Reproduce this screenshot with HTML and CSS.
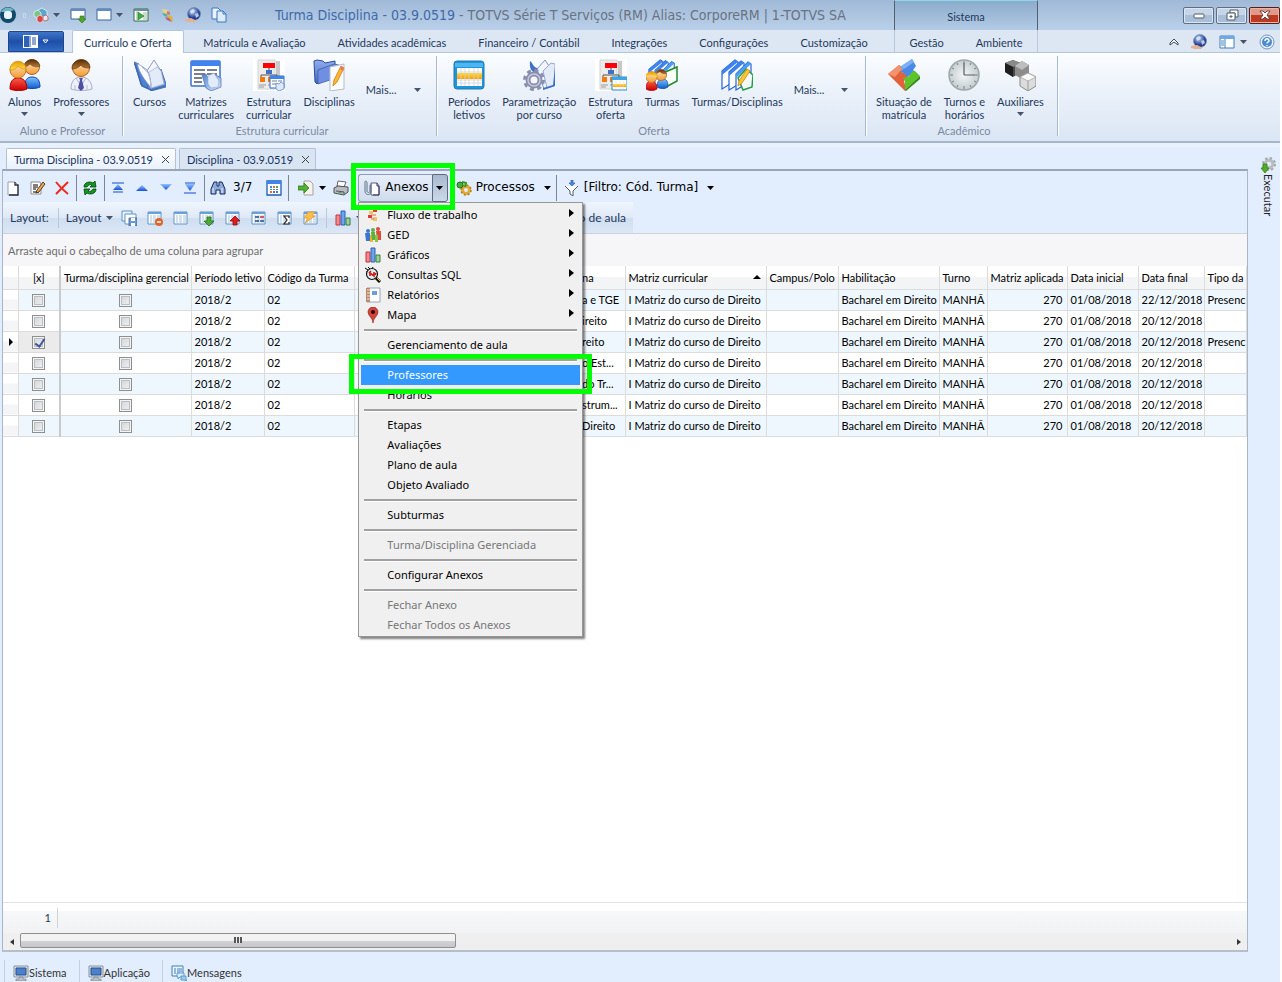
FILE: index.html
```html
<!DOCTYPE html>
<html lang="pt-BR">
<head>
    <meta charset="UTF-8">
    <meta name="viewport" content="width=device-width, initial-scale=1.0">
    <title>Turma Disciplina - 03.9.0519</title>
    <link rel="stylesheet" href="styles.css">
</head>
<body>
    <!-- Ícones -->
    <svg class="sprite" aria-hidden="true">
        <defs>
            <linearGradient id="gHair" x1="0" y1="0" x2="0" y2="1"><stop offset="0" stop-color="#5a2f08"/><stop offset="1" stop-color="#b57a3c"/></linearGradient>
            <linearGradient id="gSkin" x1="0" y1="0" x2="0" y2="1"><stop offset="0" stop-color="#ffe9bd"/><stop offset="1" stop-color="#f39a35"/></linearGradient>
            <linearGradient id="gBlond" x1="0" y1="0" x2="0" y2="1"><stop offset="0" stop-color="#e69a00"/><stop offset="1" stop-color="#ffe04a"/></linearGradient>
            <linearGradient id="gRed" x1="0" y1="0" x2="0" y2="1"><stop offset="0" stop-color="#ff5a4a"/><stop offset="1" stop-color="#c80000"/></linearGradient>
            <linearGradient id="gBlue" x1="0" y1="0" x2="0" y2="1"><stop offset="0" stop-color="#7fc0ff"/><stop offset="1" stop-color="#0a5fd0"/></linearGradient>
            <linearGradient id="gBook" x1="0" y1="0" x2="1" y2="1"><stop offset="0" stop-color="#4d82d0"/><stop offset="1" stop-color="#dcebff"/></linearGradient>
            <linearGradient id="gFolder" x1="0" y1="0" x2="0" y2="1"><stop offset="0" stop-color="#8fb1ec"/><stop offset="1" stop-color="#4566c4"/></linearGradient>
            <linearGradient id="gOrange" x1="0" y1="0" x2="0" y2="1"><stop offset="0" stop-color="#ffd93a"/><stop offset="1" stop-color="#ff9d0a"/></linearGradient>
            <linearGradient id="gArrow" x1="0" y1="0" x2="0" y2="1"><stop offset="0" stop-color="#8fc4ff"/><stop offset="1" stop-color="#1a50d8"/></linearGradient>
            <radialGradient id="gClock"><stop offset="0" stop-color="#f4f6f7"/><stop offset="1" stop-color="#c5cdd0"/></radialGradient>
            <radialGradient id="gGlobe" cx=".4" cy=".3"><stop offset="0" stop-color="#c7d8f5"/><stop offset="1" stop-color="#1d3f94"/></radialGradient>
        </defs>

        <symbol id="caret" viewBox="0 0 7 4"><path d="M0 0h7L3.5 4z" fill="currentColor"/></symbol>

        <!-- ícones grandes -->
        <symbol id="alunos" viewBox="0 0 32 32">
            <path d="M15 28c1-7 3-10 8-10 6 0 8 4 8 10-4 2-12 2-16 0z" fill="url(#gBlue)" stroke="#1546a8"/>
            <circle cx="23" cy="8" r="7.500" fill="url(#gSkin)" stroke="#a8671f"/>
            <path d="M15 7c1-8 14-9 16 0-4 2-8 0-10-2-2 2-4 3-6 2z" fill="url(#gHair)" stroke="#5a2f08" stroke-width=".5"/>
            <path d="M1 30c0-8 3-11 8-11s9 3 9 11c-4 2-13 2-17 0z" fill="url(#gRed)" stroke="#b00000"/>
            <circle cx="9" cy="11" r="8" fill="url(#gSkin)" stroke="#c07a1c"/>
            <path d="M1 11c0-11 15-12 16-1-4 0-6-1-8-3-2 3-4 4-8 4z" fill="url(#gBlond)" stroke="#d08600" stroke-width=".6"/>
        </symbol>
        <symbol id="professor" viewBox="0 0 32 32">
            <path d="M6 30c0-7 3-12 10-12s11 5 11 12c-5 2-16 2-21 0z" fill="#eef0fa" stroke="#a7abc9"/>
            <path d="M11 19l5 8 5-8M10 26v5M22 26v5" fill="none" stroke="#b6bad6"/>
            <path d="M14 19h4l-1 2 2 8-3 3-3-3 2-8z" fill="#4f4fa8"/>
            <circle cx="16" cy="9" r="8.500" fill="url(#gSkin)" stroke="#a8671f"/>
            <path d="M7 10C6-1 25-3 25 9c-5 0-8-1-9-3-2 2-5 4-9 4z" fill="url(#gHair)" stroke="#4d2806" stroke-width=".6"/>
        </symbol>
        <symbol id="livro" viewBox="0 0 32 32">
            <path d="M0 3l5 2 7 17 4 8L7 26z" fill="#4d82d0" stroke="#3a62ad" stroke-width=".8"/>
            <path d="M27 10l5 15v3l-15 4-4-4z" fill="#5b8bd2" stroke="#3a62ad" stroke-width=".8"/>
            <path d="M13 12l7-11 7 11 3 13-13 4z" fill="#f3f6fd" stroke="#8e9cc4"/>
            <path d="M14 14l9-6 4 4 3 13-13 4z" fill="#e3eaf8" stroke="#a3b0d2" stroke-width=".7"/>
            <path d="M3 4l10 7c3 5 4 11 4 18C12 22 5 15 3 4z" fill="#fbfcff" stroke="#7f93c6"/>
            <path d="M5 5l9 9c2 5 3 9 3 15" fill="none" stroke="#b6c3e2"/>
            <path d="M1 5l7 22 9 4 14-4" fill="none" stroke="#3d68b8" stroke-width="1.300"/>
        </symbol>
        <symbol id="matrizes" viewBox="0 0 32 32">
            <rect x="1" y="2" width="29" height="25" rx="1" fill="#fff" stroke="#3c6fd0" stroke-width="1.500"/>
            <path d="M1 2h29v5H1z" fill="#3f83ee"/>
            <path d="M4 11h11M17 11h10M4 15h11M17 15h10M4 19h8M4 23h8" stroke="#4d5666" stroke-width="1.300"/>
            <path d="M12 16l4-1 4 8 6-7 5 3v9l-10 4-5-3z" fill="url(#gBook)" stroke="#5b78b4" stroke-width=".8"/>
            <path d="M18 17l6-3 5 8-1 6-7 1-3-4z" fill="#e3ecfb" stroke="#92a7d4" stroke-width=".6"/>
        </symbol>
        <symbol id="estrutura" viewBox="0 0 32 32">
            <path d="M0 0h32v32H0z" fill="#fff"/>
            <path d="M5 1h17v29H5z" fill="#ececec" stroke="#d2d2d2"/><path d="M23 2h4v26h-4z" fill="#c8c8c8"/>
            <path d="M10 4h12v5H10z" fill="#fb0007"/>
            <path d="M16 9v4M8 19v-3h16v3" stroke="#555" fill="none"/>
            <path d="M13 11h6v4h-6z" fill="#4470c4"/>
            <path d="M7 18h5v5H7z" fill="#f5780a"/><path d="M15 18h4v5h-4z" fill="#f5780a"/>
            <path d="M6 26h7M15 26h3M6 28h5" stroke="#9a9a9a"/>
        </symbol>
        <symbol id="estrutura-curr" viewBox="0 0 32 32">
            <use href="#estrutura" width="32" height="32"/>
            <path d="M17 17h14v12H17z" fill="#fff" stroke="#2e6bd0"/><path d="M17 17h14v3H17z" fill="#3f83ee"/>
            <path d="M19 22h5M19 25h4M25 22h4" stroke="#6d7c94"/>
            <path d="M23 24l3 1 2-2 3 2v5l-5 2-3-2z" fill="#dbe9fd" stroke="#5b78b4" stroke-width=".7"/>
        </symbol>
        <symbol id="estrutura-oferta" viewBox="0 0 32 32">
            <use href="#estrutura" width="32" height="32"/>
            <path d="M17 18h15v13H17z" fill="#fff" stroke="#2387c8"/><path d="M17 18h15v3H17z" fill="#3ca5e8"/>
            <path d="M18 25h13v3H18z" fill="url(#gOrange)"/><path d="M21 22v8M25 22v8M28 22v8" stroke="#e6dcc8" stroke-width=".7"/>
        </symbol>
        <symbol id="disciplinas" viewBox="0 0 32 32">
            <path d="M1 2l3-1 6 1 2 2 10-2v4L4 25l-2-2z" fill="url(#gFolder)" stroke="#2f4b9c"/>
            <path d="M5 11l16-6 5 1-3 13-18 6z" fill="#6f90e2" stroke="#38559f" stroke-width=".7"/>
            <path d="M17 8l14-3v25l-14 2z" fill="#fbfcfe" stroke="#b6bccb"/>
            <path d="M28 7l3 2-7 14-4 4 1-6z" fill="#ffb62e" stroke="#c97c12" stroke-width=".8"/><path d="M28 7l3 2-1 3-3-2z" fill="#e87a6a"/>
        </symbol>
        <symbol id="calendario" viewBox="0 0 32 32">
            <rect x="1" y="2" width="30" height="28" rx="3" fill="#1f95dc" stroke="#2277b4"/>
            <path d="M2 4h28v4H2z" fill="#4db5f1"/>
            <path d="M4 9h25v18H4z" fill="#fff"/>
            <path d="M4 14h25v6H4z" fill="url(#gOrange)"/>
            <path d="M8 9v18M12 9v18M16 9v18M21 9v18M25 9v18M4 13h25M4 21h25M4 24h25" stroke="#c9d3dc" stroke-width=".8"/>
        </symbol>
        <symbol id="param" viewBox="0 0 32 32">
            <path d="M14 10l8-9 8 12 1 14-10 3z" fill="#f3f6fd" stroke="#7f93c6"/>
            <path d="M20 12l8-8 4 1v21l-8 3z" fill="#e3eaf8" stroke="#9aa6cf"/>
            <path d="M7 2c-1 8 2 11 6 12l3 4-2-9c-4-1-4-5-7-7zM32 8v19l-12 4v-2l10-3z" fill="#3f72c6"/>
            <circle cx="11" cy="21" r="6" fill="none" stroke="#8a8fae" stroke-width="5"/>
            <circle cx="11" cy="21" r="9.500" fill="none" stroke="#8a8fae" stroke-width="3" stroke-dasharray="4 3.460"/>
            <circle cx="11" cy="21" r="6" fill="none" stroke="#c4c8de" stroke-width="1.500"/>
            <circle cx="11" cy="21" r="3" fill="#f4f6fc"/>
        </symbol>
        <symbol id="pastas" viewBox="0 0 32 32">
            <path d="M1 12L14 1l3 2v17L1 30z" fill="#fff" stroke="#2465d6" stroke-width="1.200"/>
            <path d="M1 12L14 1l3 2L1 16z" fill="#3f83ee"/>
            <path d="M8 13L20 2l3 2v18L8 31z" fill="#fff" stroke="#2465d6" stroke-width="1.200"/>
            <path d="M8 13L20 2l3 2L8 17z" fill="#3f83ee"/>
            <path d="M15 15L27 3l3 2v17L15 31z" fill="#f4faff" stroke="#2465d6" stroke-width="1.200"/>
            <path d="M15 15L27 3l3 2-15 14z" fill="#4c9cf4"/>
        </symbol>
        <symbol id="turmas" viewBox="0 0 32 32">
            <use href="#pastas" width="32" height="28"/>
            <path d="M17 14l14-6v14l-13 7z" fill="#f8fff8" stroke="#1f8a2a" stroke-width="1.500"/>
            <path d="M11 28c0-6 2-8 6-8s5 3 5 8c-3 2-8 2-11 0z" fill="url(#gBlue)" stroke="#1546a8" stroke-width=".7"/>
            <circle cx="15" cy="16" r="5.500" fill="url(#gSkin)" stroke="#a8671f" stroke-width=".8"/><path d="M10 15c0-6 10-6 11 0-4 1-6-1-7-2z" fill="url(#gHair)"/>
            <path d="M0 30c0-6 2-8 5-8s6 2 6 8c-3 2-8 2-11 0z" fill="url(#gRed)" stroke="#b00000" stroke-width=".7"/>
            <circle cx="5.500" cy="18" r="5.500" fill="url(#gSkin)" stroke="#c07a1c" stroke-width=".8"/><path d="M0 18c0-7 11-7 11 0-4 0-5-1-6-2z" fill="url(#gBlond)"/>
        </symbol>
        <symbol id="turmas-disc" viewBox="0 0 32 32">
            <use href="#pastas" width="32" height="32"/>
            <path d="M17 19l8-9 7 6-1 12-9 3z" fill="#f3fbf6" stroke="#2a9a4a" stroke-width="1.500"/>
            <path d="M26 10l3 2-8 12-4 3 1-5z" fill="#ffc52e" stroke="#c98312" stroke-width=".8"/>
        </symbol>
        <symbol id="situacao" viewBox="0 0 32 32">
            <path d="M0 15L11 6l4 3-2 4 4 1 3 4-4 4 2 8-1 2z" fill="#e2603a"/><path d="M0 15L11 6l4 3-8 9z" fill="#f2936c"/>
            <path d="M12 8l12-8 4 7-3 4 3 2-9 5-3-4-4-1 3-3z" fill="#4a8ae6"/><path d="M12 8l12-8 2 3-10 7z" fill="#7fb0f4"/>
            <path d="M17 22l-2-3 5-1 5-6 3 1 4 4-15 14z" fill="#5ec42a"/><path d="M17 31l15-14v3L18 32z" fill="#2f8a14"/>
        </symbol>
        <symbol id="relogio" viewBox="0 0 32 32">
            <circle cx="16" cy="16" r="15" fill="url(#gClock)" stroke="#9fa7aa" stroke-width="1.500"/>
            <path d="M16 16V4M16 16h11" stroke="#555c60" stroke-width="1.200"/>
            <path d="M16 2v3M16 27v3M2 16h3M27 16h3M9 4l1 2M22 26l1 2M4 9l2 1M26 22l2 1M4 23l2-1M26 10l2-1M9 28l1-2M22 6l1-2" stroke="#777f83"/>
        </symbol>
        <symbol id="cubos" viewBox="0 0 32 32">
            <path d="M1 4l8-3 8 3v9l-8 5-8-5z" fill="#4a4a4a"/><path d="M1 4l8-3 8 3-8 4z" fill="#8a8a8a"/><path d="M1 4l8 4v10l-8-5z" fill="#1f1f1f"/>
            <path d="M11 7l7-5 7 4v9l-7 5-7-4z" fill="#8c8c8c"/><path d="M11 7l7-5 7 4-7 5z" fill="#bdbdbd"/>
            <path d="M16 18l8-4 8 4v9l-8 5-8-5z" fill="#dcdcdc" stroke="#8b8b8b"/><path d="M16 18l8 4 8-4-8-4z" fill="#fafafa" stroke="#9b9b9b" stroke-width=".7"/><path d="M24 22v10" stroke="#9b9b9b"/>
        </symbol>

        <!-- ícones pequenos -->
        <symbol id="totvs" viewBox="0 0 16 16"><circle cx="8" cy="8" r="8" fill="#12496b"/><path d="M1 5a8 8 0 0 1 13-2L8 5z" fill="#6db6c6"/><rect x="4" y="4" width="8" height="8" rx="3" fill="#e9f3fb"/></symbol>
        <symbol id="cubinhos" viewBox="0 0 16 16"><path d="M5 3l4-2 5 3v6l-5 3-4-4z" fill="#5aa8cf" stroke="#e8f6fb" stroke-width=".8"/><path d="M1 5l4-2 3 3v4l-4 1-3-2z" fill="#7cc48a" stroke="#f1fbf1" stroke-width=".7"/><path d="M4 10l3-2 3 2v4l-3 2-3-2z" fill="#d8474a" stroke="#fbecec" stroke-width=".7"/><path d="M10 9l3-1 2 2v3l-3 1-2-1z" fill="#e7e9ee" stroke="#b3474a" stroke-width=".7"/></symbol>
        <symbol id="janela-baixo" viewBox="0 0 16 16"><path d="M1 2h14v10H1z" fill="#fff" stroke="#3c659c"/><path d="M1 2h14v2H1z" fill="#5f8cc6"/><path d="M10 9h4v3h2l-4 4-4-4h2z" fill="#4fa52c" stroke="#2e7815" stroke-width=".6"/></symbol>
        <symbol id="janela" viewBox="0 0 16 16"><path d="M1 2h14v11H1z" fill="#fff" stroke="#3c659c"/><path d="M1 2h14v2H1z" fill="#5f8cc6"/></symbol>
        <symbol id="porta" viewBox="0 0 16 16"><path d="M1 2h14v12H1z" fill="#fff" stroke="#2f7040"/><path d="M1 2h14v2H1z" fill="#6a8a9c"/><path d="M4 3v11M11 5v8M13 5v8" stroke="#9ab5a4"/><path d="M5 5l6 4-6 4z" fill="#3fae3c" stroke="#1d7a26" stroke-width=".6"/></symbol>
        <symbol id="cores" viewBox="0 0 16 16"><path d="M3 2l6 1 1 4-5-1z" fill="#e9d872"/><path d="M8 4l3 1v3l-3-1z" fill="#d0748e"/><path d="M3 6l5 1 1 3-4-1z" fill="#5ab0a0"/><path d="M8 8l5 1 1 6-4-3z" fill="#d8b63a"/><path d="M6 10l4 1 3 4-5-2z" fill="#c2587e"/></symbol>
        <symbol id="globo" viewBox="0 0 16 16"><circle cx="9" cy="7" r="6.500" fill="url(#gGlobe)" stroke="#7086b0" stroke-width=".6"/><path d="M5 4l3-2 2 2-2 2-2 1zM10 7l3-1 1 3-3 2z" fill="#dfe7f5" opacity=".8"/><path d="M0 12l6-1 4 2 3-1-3 3H4l-4-1z" fill="#e6b193"/></symbol>
        <symbol id="copiar" viewBox="0 0 16 16"><path d="M1 1h6l3 3v8H1z" fill="#eaf3fd" stroke="#3b77c2"/><path d="M6 4h6l3 3v8H6z" fill="#dcecfd" stroke="#3b77c2"/><path d="M12 4v3h3" fill="none" stroke="#3b77c2"/></symbol>
        <symbol id="app" viewBox="0 0 15 13"><path d="M0 0h15v13H0z" fill="#fff"/><path d="M1 1h5v11H1z" fill="#2d62b4"/><path d="M9 3h4M9 5h4M9 7h4M9 9h4" stroke="#24519f"/><path d="M7 1v11" stroke="#24519f"/></symbol>
        <symbol id="caret-app" viewBox="0 0 7 5"><path d="M1 1h5L3.500 4z" fill="none" stroke="#fff"/></symbol>
        <symbol id="painel" viewBox="0 0 16 16"><path d="M1 2h14v12H1z" fill="#fff" stroke="#3c7fc0"/><path d="M1 2h14v3H1z" fill="#6fa9e2"/><path d="M6 5v9" stroke="#3c7fc0"/><path d="M2 7h3M2 9h3M2 11h3" stroke="#5584b5"/></symbol>
        <symbol id="ajuda" viewBox="0 0 16 16"><circle cx="8" cy="8" r="7" fill="#e7f0fa" stroke="#7b96b8"/><circle cx="8" cy="8" r="5" fill="#4a8ad0"/><path d="M6 7c0-3 4-3 4 0 0 1-2 1-2 2.500M8 11v1" stroke="#fff" stroke-width="1.400" fill="none"/></symbol>
        <symbol id="recolher" viewBox="0 0 10 8"><path d="M1 5l4-4 4 4v2L5 4 1 7z" fill="#fff" stroke="#3b4960"/></symbol>
        <symbol id="minimizar" viewBox="0 0 14 14"><rect x="2" y="6" width="10" height="4" rx="1" fill="#fff" stroke="#4f5a6b"/></symbol>
        <symbol id="restaurar" viewBox="0 0 14 14"><path d="M5 2h8v7h-3V5H5z" fill="#fff" stroke="#4f5a6b"/><path d="M2 5h8v7H2z" fill="#fff" stroke="#4f5a6b"/><path d="M5 8h2v1H5z" fill="#a9bdd6" stroke="#4f5a6b"/></symbol>
        <symbol id="fechar-jan" viewBox="0 0 14 14"><path d="M2 3h3l2 2 2-2h3L9 7l3 4H9L7 9l-2 2H2l3-4z" fill="#fff" stroke="#5d3836" stroke-width=".9"/></symbol>
        <symbol id="fechar-aba" viewBox="0 0 9 9"><path d="M1 1l7 7M8 1L1 8" stroke="#3f444b"/></symbol>

        <symbol id="novo" viewBox="0 0 16 16"><path d="M2 2h7l3 3v10H2z" fill="#fff" stroke="#9b9fa8"/><path d="M9 2v3h3v10H3" fill="none" stroke="#2c2f36" stroke-width="1.300"/></symbol>
        <symbol id="editar" viewBox="0 0 16 16"><path d="M1 2h9l1 2v10H1z" fill="#fff" stroke="#8d8d8d"/><path d="M3 5h5M3 7h5M3 9h3M3 12h6" stroke="#000"/><path d="M13 2l2 2-6 8-3 1 1-3z" fill="#e7a45c" stroke="#4d2e15" stroke-width=".9"/></symbol>
        <symbol id="excluir" viewBox="0 0 16 16"><path d="M2 2c3 4 7 8 12 12M14 2C10 6 6 10 2 14" stroke="#ee2a1b" stroke-width="2" fill="none"/></symbol>
        <symbol id="atualizar" viewBox="0 0 16 16"><path d="M2 7c0-5 6-6 9-4l2-2 1 6H8l2-2c-2-1-4 0-5 2z" fill="#0d9a1d" stroke="#033f08" stroke-width=".8"/><path d="M14 9c0 5-6 6-9 4l-2 2-1-6h6l-2 2c2 1 4 0 5-2z" fill="#0d9a1d" stroke="#033f08" stroke-width=".8"/></symbol>
        <symbol id="primeiro" viewBox="0 0 16 16"><path d="M2 3h12M3 12h10" stroke="#1648d8" stroke-width="1.200"/><path d="M8 4l5 6H3z" fill="url(#gArrow)"/></symbol>
        <symbol id="acima" viewBox="0 0 16 16"><path d="M8 5l6 6H2z" fill="url(#gArrow)"/></symbol>
        <symbol id="abaixo" viewBox="0 0 16 16"><path d="M8 10L2 4h12z" fill="url(#gArrow)"/></symbol>
        <symbol id="ultimo" viewBox="0 0 16 16"><path d="M3 3h10M2 13h12" stroke="#1648d8" stroke-width="1.200"/><path d="M8 11L3 4h10z" fill="url(#gArrow)"/></symbol>
        <symbol id="binoculo" viewBox="0 0 16 16"><path d="M4 2h3v4h2V2h3l3 7v5h-5v-4H6v4H1V9z" fill="#8eaad8" stroke="#17295c"/><path d="M3 8v5M12 8v5" stroke="#e9f1ff"/></symbol>
        <symbol id="grade" viewBox="0 0 16 16"><path d="M1 1h14v14H1z" fill="#fff" stroke="#1f5bb5" stroke-width="1.300"/><path d="M1 1h14v3H1z" fill="#3f83ee"/><path d="M4 6h2v2H4zM4 9h2v1H4z" fill="#3b8ad8"/><path d="M7 6h2v2H7zM4 11h2v2H4z" fill="#e26a3a"/><path d="M10 6h2v2h-2zM7 9h2v1H7z" fill="#4ca350"/><path d="M7 11h2v2H7zM10 9h2v1h-2zM10 11h2v2h-2z" fill="#5a6dc4"/></symbol>
        <symbol id="exportar" viewBox="0 0 16 16"><path d="M6 1h6l3 3v11H6z" fill="#f6f3ee" stroke="#a9a39a"/><path d="M0 6h6V3l5 5-5 5v-3H0z" fill="#52b131" stroke="#2c7d17" stroke-width=".8"/></symbol>
        <symbol id="imprimir" viewBox="0 0 16 16"><path d="M5 1l8 1-2 5-7-1z" fill="#fff" stroke="#666"/><path d="M1 8l4-2 10 1v5l-4 3-10-2z" fill="#b9bcc0" stroke="#4d5157"/><path d="M3 11l8 1v2" fill="none" stroke="#4d5157"/><path d="M5 12l4 1" stroke="#4caf50"/></symbol>
        <symbol id="anexo" viewBox="0 0 16 16"><path d="M7 3h6l2 3v9H7z" fill="#fff" stroke="#5a5b90"/><path d="M13 3v3h2v9H9" fill="none" stroke="#36366a"/><path d="M6 5v6c0 2-3 2-3 0V3c0-3-3-2-2 0v8c0 4 5 5 6 1V4" fill="none" stroke="#5b7387"/></symbol>
        <symbol id="processos" viewBox="0 0 16 16"><circle cx="10" cy="10" r="3.500" fill="none" stroke="#e2ab32" stroke-width="3"/><circle cx="10" cy="10" r="5" fill="none" stroke="#b57d18" stroke-width="1.500" stroke-dasharray="2 1.900"/><circle cx="4" cy="5" r="3" fill="#4aae3a" stroke="#1f7317"/><path d="M6 2l4 1-1 4" fill="none" stroke="#2f9a24" stroke-width="2"/></symbol>
        <symbol id="filtro" viewBox="0 0 16 16"><path d="M7 0h2v3h2L8 6 5 3h2z" fill="#4f86dc" stroke="#2f63b8" stroke-width=".7"/><path d="M1 6l5 5v3l3 2v-5l5-5" fill="#fff" stroke="#4f5864"/></symbol>

        <symbol id="tabela" viewBox="0 0 16 16"><path d="M1 2h13v12H1z" fill="#fff" stroke="#5f93c8"/><path d="M1 2h13v2H1z" fill="#6aa0d8"/><path d="M3 6h2M6 6h3M10 6h3M3 8h2M6 8h3M10 8h3M3 10h2M6 10h3M10 10h3M3 12h2M6 12h3M10 12h3" stroke="#a7c3dd"/></symbol>
        <symbol id="tabela-salvar" viewBox="0 0 16 16"><path d="M1 1h10v10H1z" fill="#e8f2fb" stroke="#5f93c8"/><path d="M4 4h11v10H4z" fill="#fff" stroke="#5f93c8"/><path d="M8 8h8v8H8z" fill="#6f9bd4" stroke="#345f9c" stroke-width=".8"/><path d="M10 8h4v3h-4zM10 13h4v3h-4z" fill="#fff"/></symbol>
        <symbol id="tabela-menos" viewBox="0 0 16 16"><use href="#tabela" width="16" height="16"/><circle cx="12" cy="12" r="4" fill="#e0642c"/><path d="M10 12h4" stroke="#fff" stroke-width="1.500"/></symbol>
        <symbol id="tabela-desce" viewBox="0 0 16 16"><use href="#tabela" width="16" height="16"/><path d="M8 7h4v4h3l-5 5-5-5h3z" fill="#4fa83a" stroke="#276b18" stroke-width=".8"/></symbol>
        <symbol id="tabela-sobe" viewBox="0 0 16 16"><use href="#tabela" width="16" height="16"/><path d="M8 15h4v-4h3l-5-5-5 5h3z" fill="#e01c1c" stroke="#8d0b0b" stroke-width=".8"/></symbol>
        <symbol id="tabela-linhas" viewBox="0 0 16 16"><use href="#tabela" width="16" height="16"/><path d="M4 7h4M4 11h4" stroke="#234c80" stroke-width="1.500"/><path d="M9 7h4" stroke="#d02a2a" stroke-width="1.500"/><path d="M9 11h4" stroke="#234c80" stroke-width="1.500"/></symbol>
        <symbol id="tabela-soma" viewBox="0 0 16 16"><use href="#tabela" width="16" height="16"/><path d="M12 8V6H7l3 4-3 4h5v-2" fill="#fff" stroke="#222" stroke-width="1.200"/></symbol>
        <symbol id="tabela-raio" viewBox="0 0 16 16"><use href="#tabela" width="16" height="16"/><path d="M5 2h7L9 6h3L2 13l3-5H1z" fill="#fbc04a" stroke="#dd9320" stroke-width=".7"/></symbol>
        <symbol id="grafico" viewBox="0 0 16 16"><path d="M1 5h4v10H1z" fill="#f08a90" stroke="#c8323c"/><path d="M6 1h4v14H6z" fill="#6fa4e8" stroke="#2a62b8"/><path d="M11 8h4v7h-4z" fill="#a2cf9a" stroke="#35803a"/></symbol>

        <symbol id="fluxo" viewBox="0 0 16 16"><path d="M3 0h10v16H3z" fill="#f8efe4"/><path d="M8 1h4v4H8zM3 8h4v3H3z" fill="#e03a34"/><path d="M4 4h4v3H4zM8 10h4v4H8z" fill="#eac46f"/><path d="M6 8h5M6 12h3" stroke="#cf6f5f"/></symbol>
        <symbol id="ged" viewBox="0 0 16 16"><circle cx="3" cy="4" r="2" fill="#3d76d0"/><path d="M0 6h5v8H1z" fill="#3d76d0"/><circle cx="8" cy="3" r="2" fill="#59b33e"/><path d="M5 8h3v7H5z" fill="#f0b52c"/><path d="M6 5h4v8H7z" fill="#59b33e"/><circle cx="13" cy="2" r="2" fill="#e04a3a"/><path d="M11 4h5v9h-4z" fill="#e04a3a"/><path d="M10 8h3v7h-3z" fill="#8cc152"/></symbol>
        <symbol id="sql" viewBox="0 0 16 16"><path d="M0 1l3 2M3 0l2 2M1 5h3M8 0L7 2" stroke="#000"/><circle cx="7" cy="7" r="5.500" fill="#d5f3f3" stroke="#111" stroke-width="1.200"/><path d="M4 6l2-2M5 9V6l4 3V5M10 8l1-2" stroke="#e01010" stroke-width="1.600" fill="none"/><path d="M11 11l4 4" stroke="#111" stroke-width="3"/><path d="M12 11l3 3" stroke="#e8c51c"/></symbol>
        <symbol id="relatorio" viewBox="0 0 16 16"><path d="M2 1h13v14H2z" fill="#fff" stroke="#9aa5b4"/><path d="M1 1h4v14H1z" fill="#b98a70"/><path d="M2 3h3M2 6h3M2 9h3M2 12h3" stroke="#f4e3d7"/><path d="M7 5h5M7 7h5" stroke="#3f7ccf" stroke-width="1.300"/></symbol>
        <symbol id="pino" viewBox="0 0 16 16"><path d="M8 16C8 11 3 9 3 5a5 5 0 0 1 10 0c0 4-5 6-5 11z" fill="#d0453c" stroke="#9c2a22" stroke-width=".7"/><circle cx="8" cy="5" r="2" fill="#30090a"/></symbol>

        <symbol id="monitor" viewBox="0 0 16 16"><path d="M1 1h14v11H1z" fill="#dfe3e8" stroke="#8a929c"/><path d="M3 3h10v7H3z" fill="#4a80cc" stroke="#2b4f88"/><path d="M6 12h4v2h3v2H3v-2h3z" fill="#bcc2c9" stroke="#7b838d" stroke-width=".7"/></symbol>
        <symbol id="mensagens" viewBox="0 0 16 16"><path d="M1 1h11v10H1z" fill="#eaf4fd" stroke="#3e7fb8"/><path d="M3 4h2M6 4h5M3 6h2M6 6h5M3 8h2M6 8h3" stroke="#3e7fb8"/><path d="M6 8h7v4H9l-2 2v-2H6z" fill="#d8ecfb" stroke="#4a8ec6" stroke-width=".8"/><path d="M10 11h5v3l1 2-3-1h-3z" fill="#9fccee" stroke="#4a8ec6" stroke-width=".8"/></symbol>
        <symbol id="executar" viewBox="0 0 16 16"><circle cx="9" cy="7" r="3.800" fill="none" stroke="#b9bdbd" stroke-width="3"/><circle cx="9" cy="7" r="6" fill="none" stroke="#a5a9a9" stroke-width="2" stroke-dasharray="2.500 2.200"/><path d="M3 7h4v4h2l-4 5-4-5h2z" fill="#55ac2a" stroke="#2f7d12" stroke-width=".8"/></symbol>
    </svg>

    <header class="titlebar">
        <div class="quick">
            <svg class="ic"><use href="#totvs"/></svg>
            <span class="grip"></span>
            <button aria-label="Módulos"><svg class="ic"><use href="#cubinhos"/></svg><svg class="caret"><use href="#caret"/></svg></button>
            <button aria-label="Abrir"><svg class="ic"><use href="#janela-baixo"/></svg></button>
            <button aria-label="Janelas"><svg class="ic"><use href="#janela"/></svg><svg class="caret"><use href="#caret"/></svg></button>
            <button aria-label="Sair"><svg class="ic"><use href="#porta"/></svg></button>
            <button aria-label="Cores"><svg class="ic"><use href="#cores"/></svg></button>
            <button aria-label="Web"><svg class="ic"><use href="#globo"/></svg></button>
            <button aria-label="Copiar"><svg class="ic"><use href="#copiar"/></svg></button>
        </div>
        <h1 class="titulo"><b>Turma Disciplina - 03.9.0519</b> - TOTVS Série T Serviços (RM) Alias: CorporeRM | 1-TOTVS SA</h1>
        <div class="contexto">Sistema</div>
        <div class="janela-botoes">
            <button class="jb" aria-label="Minimizar"><svg class="ic14"><use href="#minimizar"/></svg></button>
            <button class="jb" aria-label="Restaurar"><svg class="ic14"><use href="#restaurar"/></svg></button>
            <button class="jb fechar" aria-label="Fechar"><svg class="ic14"><use href="#fechar-jan"/></svg></button>
        </div>
    </header>

    <nav class="abas">
        <div class="abas-principais">
            <button class="app-btn" aria-label="Menu"><svg class="ic-app"><use href="#app"/></svg><svg class="caret-app"><use href="#caret-app"/></svg></button>
            <a class="aba ativa" href="#">Currículo e Oferta</a>
            <a class="aba" href="#">Matrícula e Avaliação</a>
            <a class="aba" href="#">Atividades acadêmicas</a>
            <a class="aba" href="#">Financeiro / Contábil</a>
            <a class="aba" href="#">Integrações</a>
            <a class="aba" href="#">Configurações</a>
            <a class="aba" href="#">Customização</a>
        </div>
        <div class="abas-contexto">
            <a class="aba" href="#">Gestão</a>
            <a class="aba" href="#">Ambiente</a>
        </div>
        <div class="abas-direita">
            <button aria-label="Recolher"><svg class="ic-rec"><use href="#recolher"/></svg></button>
            <button aria-label="Web"><svg class="ic"><use href="#globo"/></svg></button>
            <button aria-label="Painel"><svg class="ic"><use href="#painel"/></svg><svg class="caret"><use href="#caret"/></svg></button>
            <button aria-label="Ajuda"><svg class="ic"><use href="#ajuda"/></svg></button>
        </div>
    </nav>

    <section class="ribbon">
        <div class="grupo g1">
            <div class="itens">
                <button class="rb"><svg class="ic32"><use href="#alunos"/></svg><span>Alunos</span><svg class="caret"><use href="#caret"/></svg></button>
                <button class="rb"><svg class="ic32"><use href="#professor"/></svg><span>Professores</span><svg class="caret"><use href="#caret"/></svg></button>
            </div>
            <div class="legenda">Aluno e Professor</div>
        </div>
        <div class="grupo g2">
            <div class="itens">
                <button class="rb"><svg class="ic32"><use href="#livro"/></svg><span>Cursos</span></button>
                <button class="rb"><svg class="ic32"><use href="#matrizes"/></svg><span>Matrizes<br>curriculares</span></button>
                <button class="rb"><svg class="ic32"><use href="#estrutura-curr"/></svg><span>Estrutura<br>curricular</span></button>
                <button class="rb"><svg class="ic32"><use href="#disciplinas"/></svg><span>Disciplinas</span></button>
                <button class="mais">Mais...<svg class="caret"><use href="#caret"/></svg></button>
            </div>
            <div class="legenda">Estrutura curricular</div>
        </div>
        <div class="grupo g3">
            <div class="itens">
                <button class="rb"><svg class="ic32"><use href="#calendario"/></svg><span>Períodos<br>letivos</span></button>
                <button class="rb"><svg class="ic32"><use href="#param"/></svg><span>Parametrização<br>por curso</span></button>
                <button class="rb"><svg class="ic32"><use href="#estrutura-oferta"/></svg><span>Estrutura<br>oferta</span></button>
                <button class="rb"><svg class="ic32"><use href="#turmas"/></svg><span>Turmas</span></button>
                <button class="rb"><svg class="ic32"><use href="#turmas-disc"/></svg><span>Turmas/Disciplinas</span></button>
                <button class="mais">Mais...<svg class="caret"><use href="#caret"/></svg></button>
            </div>
            <div class="legenda">Oferta</div>
        </div>
        <div class="grupo g4">
            <div class="itens">
                <button class="rb"><svg class="ic32"><use href="#situacao"/></svg><span>Situação de<br>matrícula</span></button>
                <button class="rb"><svg class="ic32"><use href="#relogio"/></svg><span>Turnos e<br>horários</span></button>
                <button class="rb"><svg class="ic32"><use href="#cubos"/></svg><span>Auxiliares</span><svg class="caret"><use href="#caret"/></svg></button>
            </div>
            <div class="legenda">Acadêmico</div>
        </div>
    </section>

    <main class="area">
        <div class="documento">
            <div class="doc-abas">
                <div class="doc-aba ativa"><a href="#">Turma Disciplina - 03.9.0519</a><button aria-label="Fechar aba"><svg class="ic9"><use href="#fechar-aba"/></svg></button></div>
                <div class="doc-aba"><a href="#">Disciplina - 03.9.0519</a><button aria-label="Fechar aba"><svg class="ic9"><use href="#fechar-aba"/></svg></button></div>
            </div>

            <div class="painel">
                <div class="barra barra1">
                    <button aria-label="Novo"><svg class="ic"><use href="#novo"/></svg></button>
                    <button aria-label="Editar"><svg class="ic"><use href="#editar"/></svg></button>
                    <button aria-label="Excluir"><svg class="ic"><use href="#excluir"/></svg></button>
                    <span class="sep"></span>
                    <button aria-label="Atualizar"><svg class="ic"><use href="#atualizar"/></svg></button>
                    <span class="sep"></span>
                    <button aria-label="Primeiro"><svg class="ic"><use href="#primeiro"/></svg></button>
                    <button aria-label="Anterior"><svg class="ic"><use href="#acima"/></svg></button>
                    <button aria-label="Próximo"><svg class="ic"><use href="#abaixo"/></svg></button>
                    <button aria-label="Último"><svg class="ic"><use href="#ultimo"/></svg></button>
                    <span class="sep"></span>
                    <button aria-label="Localizar"><svg class="ic"><use href="#binoculo"/></svg></button>
                    <span class="contador">3/7</span>
                    <button aria-label="Grade"><svg class="ic"><use href="#grade"/></svg></button>
                    <span class="sep"></span>
                    <button class="exportar" aria-label="Exportar"><svg class="ic"><use href="#exportar"/></svg><svg class="caret"><use href="#caret"/></svg></button>
                    <button aria-label="Imprimir"><svg class="ic"><use href="#imprimir"/></svg></button>
                    <div class="anexos">
                        <button class="anexos-btn"><svg class="ic"><use href="#anexo"/></svg>Anexos</button>
                        <button class="anexos-seta" aria-label="Abrir anexos"><svg class="caret"><use href="#caret"/></svg></button>
                        <ul class="menu">
                            <li><button><svg class="ic"><use href="#fluxo"/></svg>Fluxo de trabalho<i></i></button></li>
                            <li><button><svg class="ic"><use href="#ged"/></svg>GED<i></i></button></li>
                            <li><button><svg class="ic"><use href="#grafico"/></svg>Gráficos<i></i></button></li>
                            <li><button><svg class="ic"><use href="#sql"/></svg>Consultas SQL<i></i></button></li>
                            <li><button><svg class="ic"><use href="#relatorio"/></svg>Relatórios<i></i></button></li>
                            <li><button><svg class="ic"><use href="#pino"/></svg>Mapa<i></i></button></li>
                            <li class="divisor"></li>
                            <li><button>Gerenciamento de aula</button></li>
                            <li class="divisor"></li>
                            <li class="selecionado"><button>Professores</button></li>
                            <li><button>Horários</button></li>
                            <li class="divisor"></li>
                            <li><button>Etapas</button></li>
                            <li><button>Avaliações</button></li>
                            <li><button>Plano de aula</button></li>
                            <li><button>Objeto Avaliado</button></li>
                            <li class="divisor"></li>
                            <li><button>Subturmas</button></li>
                            <li class="divisor"></li>
                            <li><button disabled>Turma/Disciplina Gerenciada</button></li>
                            <li class="divisor"></li>
                            <li><button>Configurar Anexos</button></li>
                            <li class="divisor"></li>
                            <li><button disabled>Fechar Anexo</button></li>
                            <li><button disabled>Fechar Todos os Anexos</button></li>
                        </ul>
                    </div>
                    <button class="com-texto"><svg class="ic"><use href="#processos"/></svg>Processos<svg class="caret"><use href="#caret"/></svg></button>
                    <span class="sep"></span>
                    <button class="com-texto"><svg class="ic"><use href="#filtro"/></svg>[Filtro: Cód. Turma]<svg class="caret"><use href="#caret"/></svg></button>
                </div>

                <div class="barra barra2">
                    <span class="rotulo">Layout:</span>
                    <span class="sep claro"></span>
                    <button class="layout-btn">Layout<svg class="caret"><use href="#caret"/></svg></button>
                    <button aria-label="Salvar layout"><svg class="ic"><use href="#tabela-salvar"/></svg></button>
                    <button aria-label="Excluir layout"><svg class="ic"><use href="#tabela-menos"/></svg></button>
                    <button aria-label="Layout padrão"><svg class="ic"><use href="#tabela"/></svg></button>
                    <button aria-label="Importar"><svg class="ic"><use href="#tabela-desce"/></svg></button>
                    <button aria-label="Exportar layout"><svg class="ic"><use href="#tabela-sobe"/></svg></button>
                    <button aria-label="Linhas"><svg class="ic"><use href="#tabela-linhas"/></svg></button>
                    <button aria-label="Totais"><svg class="ic"><use href="#tabela-soma"/></svg></button>
                    <button aria-label="Formatação"><svg class="ic"><use href="#tabela-raio"/></svg></button>
                    <span class="sep claro"></span>
                    <button aria-label="Gráfico"><svg class="ic"><use href="#grafico"/></svg><svg class="caret"><use href="#caret"/></svg></button>
                    <span class="fim">o de aula</span>
                </div>

                <div class="agrupar">Arraste aqui o cabeçalho de uma coluna para agrupar</div>

                <div class="grade">
                    <table>
                        <colgroup>
                            <col class="c-ind"><col class="c-x"><col class="c-ger"><col class="c-per"><col class="c-cod"><col class="c-vazio"><col class="c-nome"><col class="c-mat"><col class="c-cam"><col class="c-hab"><col class="c-tur"><col class="c-apl"><col class="c-ini"><col class="c-fim"><col class="c-tipo">
                        </colgroup>
                        <thead>
                            <tr><th></th><th class="x">[x]</th><th>Turma/disciplina gerencial</th><th>Período letivo</th><th>Código da Turma</th><th class="vazio"></th><th>na</th><th class="ordem">Matriz curricular</th><th>Campus/Polo</th><th>Habilitação</th><th>Turno</th><th>Matriz aplicada</th><th>Data inicial</th><th>Data final</th><th>Tipo da</th></tr>
                        </thead>
                        <tbody id="linhas"></tbody>
                    </table>
                </div>

                <div class="rodape"><span>1</span></div>
                <div class="rolagem">
                    <button class="seta esq" aria-label="Rolar à esquerda"></button>
                    <div class="trilho"><div class="polegar"></div></div>
                    <button class="seta dir" aria-label="Rolar à direita"></button>
                </div>
            </div>

            <footer class="status">
                <a href="#"><svg class="ic"><use href="#monitor"/></svg>Sistema</a>
                <a href="#"><svg class="ic"><use href="#monitor"/></svg>Aplicação</a>
                <a href="#"><svg class="ic"><use href="#mensagens"/></svg>Mensagens</a>
            </footer>
        </div>
        <aside class="lateral">
            <button><svg class="ic"><use href="#executar"/></svg>Executar</button>
        </aside>
    </main>

    <script>
        const turmas = [
            { nome: "a e TGE", fim: "22/12/2018", tipo: "Presenc" },
            { nome: "ireito", fim: "20/12/2018", tipo: "" },
            { nome: "reito", fim: "20/12/2018", tipo: "Presenc", atual: true },
            { nome: "o Est...", fim: "20/12/2018", tipo: "" },
            { nome: "do Tr...", fim: "20/12/2018", tipo: "" },
            { nome: "strum...", fim: "20/12/2018", tipo: "" },
            { nome: "Direito", fim: "20/12/2018", tipo: "" }
        ];

        document.getElementById("linhas").innerHTML = turmas.map((t, n) => `
            <tr class="${t.atual ? "atual" : ""}">
                <td class="ind"></td>
                <td class="x"><input type="checkbox" aria-label="Selecionar linha ${n + 1}" ${t.atual ? "checked" : ""}></td>
                <td class="centro"><input type="checkbox" aria-label="Gerencial ${n + 1}"></td>
                <td>2018/2</td><td>02</td><td class="vazio"></td><td>${t.nome}</td>
                <td>I Matriz do curso de Direito</td><td></td><td>Bacharel em Direito</td><td>MANHÃ</td>
                <td class="num">270</td><td>01/08/2018</td><td>${t.fim}</td><td>${t.tipo}</td>
            </tr>`).join("");
    </script>
</body>
</html>
```
FILE: styles.css
```css
* {
    box-sizing: border-box;
}
html, body {
    height: 100%;
}
body {
    margin: 0;
    padding-right: 2px;
    background: #fff;
    color: #1e395b;
    font-family: Lato, "Noto Sans", sans-serif;
    font-size: 11px;
    line-height: 13px;
    display: flex;
    flex-direction: column;
    overflow: hidden;
}
button {
    font: inherit;
    color: inherit;
    background: none;
    border: none;
    padding: 0;
    display: flex;
    align-items: center;
    flex: none;
}
a {
    color: inherit;
    text-decoration: none;
}
svg {
    flex: none;
    display: block;
}

/* Ícones */
.sprite { position: absolute; width: 0; height: 0; }
.ic { width: 16px; height: 16px; }
.ic9 { width: 9px; height: 9px; }
.ic14 { width: 14px; height: 14px; }
.ic32 { width: 32px; height: 32px; }
.ic-app { width: 15px; height: 13px; }
.ic-rec { width: 10px; height: 8px; }
.caret { width: 7px; height: 4px; color: #44546a; }
.caret-app { width: 7px; height: 5px; }

/* Barra de título */
.titlebar {
    height: 30px;
    flex: none;
    display: flex;
    background: linear-gradient(#a0b9d6, #bad0ea);
}
.quick {
    display: flex;
    align-items: center;
    gap: 10px;
}
.quick button {
    gap: 4px;
}
.grip {
    width: 3px;
    height: 5px;
    margin: 0 -3px;
    border: 1px solid #c6d7ea;
}
.titulo {
    flex: 1;
    margin: 0;
    text-align: center;
    font: 14px/30px "DejaVu Sans Condensed", "Noto Sans", sans-serif;
    color: #69727f;
    white-space: nowrap;
}
.titulo b {
    font-weight: normal;
    color: #3e6aaa;
}
.contexto {
    width: 144px;
    text-align: center;
    line-height: 31px;
    background: linear-gradient(#8cabcb, #b3cbe6);
    border-top: 1px solid #8fd8ea;
    border-left: 1px solid #55606e;
    border-right: 1px solid #55606e;
}
.janela-botoes {
    width: 242px;
    display: flex;
    justify-content: flex-end;
    align-items: center;
    gap: 2px;
}
.jb {
    width: 31px;
    height: 17px;
    justify-content: center;
    border: 1px solid #5f6f83;
    border-radius: 2px;
    background: linear-gradient(#c6d6e8 50%, #a9bfd8 50%);
    box-shadow: inset 0 0 0 1px #dce7f3;
}
.jb.fechar {
    border-color: #5c1a14;
    background: linear-gradient(#e09a8a 50%, #bf3a22 50%);
    box-shadow: inset 0 0 0 1px #e9b5a8;
}

/* Abas do menu */
.abas {
    height: 23px;
    flex: none;
    display: flex;
    background: #dde7f4;
    border-bottom: 1px solid #b3c6de;
}
.abas-principais {
    flex: 1;
    display: flex;
    padding-left: 8px;
}
.app-btn {
    width: 56px;
    height: 21px;
    margin: 1px 8px 0 0;
    justify-content: center;
    gap: 4px;
    background: linear-gradient(#3f76c8, #1f4fa8 50%, #2f6cc4);
    border: 1px solid #21448a;
    border-radius: 2px 2px 0 0;
}
.aba {
    padding: 0 16px;
    line-height: 26px;
    white-space: nowrap;
}
.aba.ativa {
    height: 23px;
    padding: 0 12px 0 11px;
    margin-right: 3px;
    background: #fbfdff;
    border: 1px solid #b3c6de;
    border-bottom: none;
    border-radius: 2px 2px 0 0;
    line-height: 24px;
}
.abas-contexto {
    width: 144px;
    display: flex;
    justify-content: center;
    border-left: 1px solid #b9c8db;
    border-right: 1px solid #b9c8db;
}
.abas-direita {
    width: 242px;
    display: flex;
    justify-content: flex-end;
    align-items: center;
    gap: 12px;
    padding: 2px 5px 0;
}
.abas-direita button {
    gap: 5px;
}

/* Ribbon */
.ribbon {
    height: 90px;
    flex: none;
    display: flex;
    background: linear-gradient(#fbfdff, #e9f0f9 50%, #dbe6f4);
    border-bottom: 2px solid #a5b6cb;
}
.grupo {
    display: flex;
    flex-direction: column;
    position: relative;
}
.grupo::after {
    content: "";
    position: absolute;
    right: 0;
    top: 3px;
    bottom: 5px;
    width: 1px;
    background: #a6b9d2;
    box-shadow: 1px 0 #fff;
}
.g1 { width: 123px; padding-left: 2px; }
.g2 { width: 314px; padding-left: 4px; }
.g3 { width: 429px; padding-left: 5px; }
.g4 { width: 192px; padding-left: 4px; }
.itens {
    flex: 1;
    display: flex;
    align-items: flex-start;
}
.rb {
    flex-direction: column;
    padding: 6px 6px 0;
    text-align: center;
}
.rb span {
    margin-top: 4px;
    white-space: nowrap;
}
.rb .caret {
    margin-top: 4px;
}
.mais {
    padding: 30px 5px 0;
    gap: 17px;
}
.legenda {
    height: 20px;
    line-height: 19px;
    text-align: center;
    color: #7a8aa3;
}

/* Área de trabalho */
.area {
    flex: 1;
    min-height: 0;
    display: flex;
    background: #e2edfe;
    border-top: 4px solid #e9f1fc;
}
.documento {
    flex: 1;
    min-width: 0;
    display: flex;
    flex-direction: column;
    padding: 1px 0 0 2px;
}
.doc-abas {
    display: flex;
    gap: 3px;
    padding-left: 4px;
    height: 21px;
    flex: none;
}
.doc-aba {
    display: flex;
    align-items: center;
    gap: 8px;
    padding: 0 5px 0 7px;
    background: #dae5f4;
    border: 1px solid #b4c2d4;
    border-bottom: none;
    border-radius: 2px 2px 0 0;
    color: #14315c;
    white-space: nowrap;
}
.doc-aba.ativa {
    background: linear-gradient(#fff, #e9f1fd);
}
.painel {
    flex: 1;
    min-height: 0;
    display: flex;
    flex-direction: column;
    border: 1px solid #aab6c5;
    border-top: 2px solid #9ba6b4;
    border-bottom: 2px solid #b5bfcc;
}

/* Barras de ferramentas */
.barra {
    display: flex;
    align-items: center;
    flex: none;
}
.barra1 {
    height: 31px;
    padding-top: 2px;
    font-family: "DejaVu Sans", sans-serif;
    font-size: 12px;
    color: #000;
}
.barra1 .ic {
    margin: 0 5px 0 3px;
}
.barra1 .caret {
    color: #000;
}
.sep {
    width: 1px;
    height: 26px;
    margin: 0 2px 0 1px;
    background: #7e858f;
}
.sep.claro {
    height: 20px;
    background: #b9c7d9;
    margin: 0 3px 0 2px;
}
.contador {
    padding: 0 11px 0 2px;
}
.exportar {
    margin: 0 4px;
}
.anexos {
    position: relative;
    display: flex;
    height: 28px;
    margin: 0 3px 0 4px;
}
.anexos::after {
    content: "";
    position: absolute;
    z-index: 3;
    inset: -11px -7px -8px;
    border: 5px solid #00ff00;
}
.anexos-btn {
    border: 1px solid #8f9db0;
    border-right: none;
    border-radius: 3px 0 0 3px;
    background: linear-gradient(#e7eefa, #d0dcec);
    padding: 0 3px 0 2px;
}
.anexos-seta {
    width: 16px;
    justify-content: center;
    border: 1px solid #5d6b80;
    border-radius: 0 3px 3px 0;
    background: linear-gradient(#a9b8cd, #ccd9ea);
}
.com-texto .ic {
    margin: 0 4px 0 5px;
}
.com-texto .caret {
    margin: 0 4px 0 9px;
}
.barra2 {
    width: 630px;
    height: 31px;
    padding-left: 7px;
    background: linear-gradient(#eff5fd, #dfe9f6 50%, #cfdef0 52%, #dbe7f6);
}
.rotulo, .layout-btn {
    font-size: 12px;
}
.rotulo {
    padding-right: 7px;
}
.layout-btn {
    gap: 4px;
    margin: 0 3px 0 4px;
}
.barra2 .ic {
    margin: 0 5px;
}
.fim {
    margin-left: auto;
    padding-right: 7px;
    font-size: 12px;
}

/* Menu de anexos */
.menu {
    position: absolute;
    z-index: 2;
    top: 28px;
    left: 0;
    width: 225px;
    margin: 0;
    padding: 2px 2px 1px;
    list-style: none;
    background: #f0f0f0;
    border: 1px solid #979797;
    box-shadow: 2px 2px 2px rgba(0, 0, 0, 0.5);
    font: 11px/20px "Noto Sans", sans-serif;
}
.menu button {
    position: relative;
    width: 100%;
    height: 20px;
    padding-left: 26px;
}
.barra .menu .ic {
    position: absolute;
    left: 4px;
    top: 2px;
    margin: 0;
}
.menu i {
    margin: 0 6px 4px auto;
    border: 4px solid transparent;
    border-left: 5px solid #000;
    border-right: none;
}
.menu button:disabled {
    color: #777;
}
.divisor {
    height: 10px;
    padding: 4px 3px 0;
}
.divisor::before {
    content: "";
    display: block;
    height: 2px;
    background: #a0a0a0;
    border-bottom: 1px solid #fff;
}
.selecionado {
    position: relative;
    background: #3399ff;
    color: #fff;
}
.selecionado::after {
    content: "";
    position: absolute;
    z-index: 1;
    inset: -11px -12px -9px;
    border: 5px solid #00ff00;
}

/* Grade */
.agrupar {
    flex: none;
    height: 33px;
    padding-left: 5px;
    line-height: 34px;
    background: #f6f6f8;
    border-top: 1px solid #cfd3d9;
    color: #6d6d6d;
}
.grade {
    flex: 1;
    min-height: 0;
    overflow: hidden;
    background: #fff;
}
table {
    table-layout: fixed;
    width: 100%;
    min-width: 1244px;
    border-collapse: collapse;
    color: #000;
}
.c-ind { width: 15px; }
.c-x { width: 42px; }
.c-ger { width: 131px; }
.c-per { width: 73px; }
.c-cod { width: 90px; }
.c-vazio { width: 225px; }
.c-nome { width: 46px; }
.c-mat { width: 141px; }
.c-cam { width: 72px; }
.c-hab { width: 101px; }
.c-tur { width: 48px; }
.c-apl { width: 80px; }
.c-ini { width: 71px; }
.c-fim { width: 66px; }
th, td {
    height: 21px;
    padding: 0 0 0 3px;
    border-right: 1px solid #dcdcdc;
    border-bottom: 1px solid #dcdcdc;
    text-align: left;
    font-weight: normal;
    white-space: nowrap;
    overflow: hidden;
}
th {
    height: 23px;
    background: linear-gradient(#fff 50%, #f3f4f6 50%);
}
th.vazio, td.vazio {
    border-right: none;
}
tbody tr:nth-child(odd) {
    background: #eef7fe;
}
.x {
    padding: 0;
    text-align: center;
    border-right: 2px solid #c9cbce;
}
.centro {
    padding: 0;
    text-align: center;
}
.num {
    text-align: right;
    padding-right: 4px;
}
.ind {
    background: linear-gradient(#fff 50%, #f4f5f7 50%);
}
.atual .x {
    background: #ebebeb;
}
.atual .ind::before {
    content: "";
    display: block;
    width: 4px;
    margin-left: 3px;
    border: 4px solid transparent;
    border-left-color: #000;
    border-right: none;
}
.ordem::after {
    content: "";
    float: right;
    margin: 4px 5px 0 0;
    border: 4px solid transparent;
    border-top: none;
    border-bottom-color: #000;
}
input[type="checkbox"] {
    appearance: none;
    width: 13px;
    height: 13px;
    margin: 0;
    vertical-align: middle;
    border: 1px solid #8e8f8f;
    background: linear-gradient(135deg, #cfd3d6, #f3f3f3);
    box-shadow: inset 0 0 0 1px #f4f4f4, inset 0 0 0 2px #b9bfc5;
}
input[type="checkbox"]:checked::before {
    content: "";
    display: block;
    width: 4px;
    height: 8px;
    margin: 0 0 0 4px;
    border: solid #41559c;
    border-width: 0 2px 2px 0;
    transform: rotate(35deg);
}
.rodape {
    flex: none;
    height: 31px;
    display: flex;
    align-items: center;
    background: linear-gradient(#fff 25%, #f7f8f9 25%, #f1f2f4);
    border-top: 1px solid #e1e3e6;
}
.rodape span {
    width: 55px;
    padding-right: 6px;
    line-height: 20px;
    text-align: right;
    border-right: 1px solid #d0d3d7;
}

/* Barra de rolagem horizontal */
.rolagem {
    flex: none;
    height: 17px;
    display: flex;
    background: #efefef;
}
.seta {
    width: 17px;
    justify-content: center;
}
.seta::before {
    content: "";
    border: 3px solid transparent;
}
.esq::before {
    border-right: 4px solid #333;
    border-left: none;
}
.dir::before {
    border-left: 4px solid #333;
    border-right: none;
}
.trilho {
    flex: 1;
}
.polegar {
    width: 36%;
    height: 15px;
    border: 1px solid #8e8f8f;
    border-radius: 2px;
    background: linear-gradient(#f2f2f2 50%, #d2d3d6 50%, #c6c7ca);
}
.polegar::before {
    content: "";
    display: block;
    width: 8px;
    height: 6px;
    margin: 3px auto;
    background: repeating-linear-gradient(90deg, #555 0 2px, #eee 2px 3px);
}

/* Barra de status */
.status {
    flex: none;
    height: 30px;
    display: flex;
    padding: 8px 0 0 2px;
    color: #333;
}
.status a {
    display: flex;
    align-items: center;
    padding: 3px 12px 0 8px;
    border-left: 1px solid #c3d0e2;
}
.lateral {
    width: 32px;
    padding: 10px 8px 0 12px;
}
.lateral button {
    writing-mode: vertical-rl;
    gap: 1px;
    color: #222;
}
```
